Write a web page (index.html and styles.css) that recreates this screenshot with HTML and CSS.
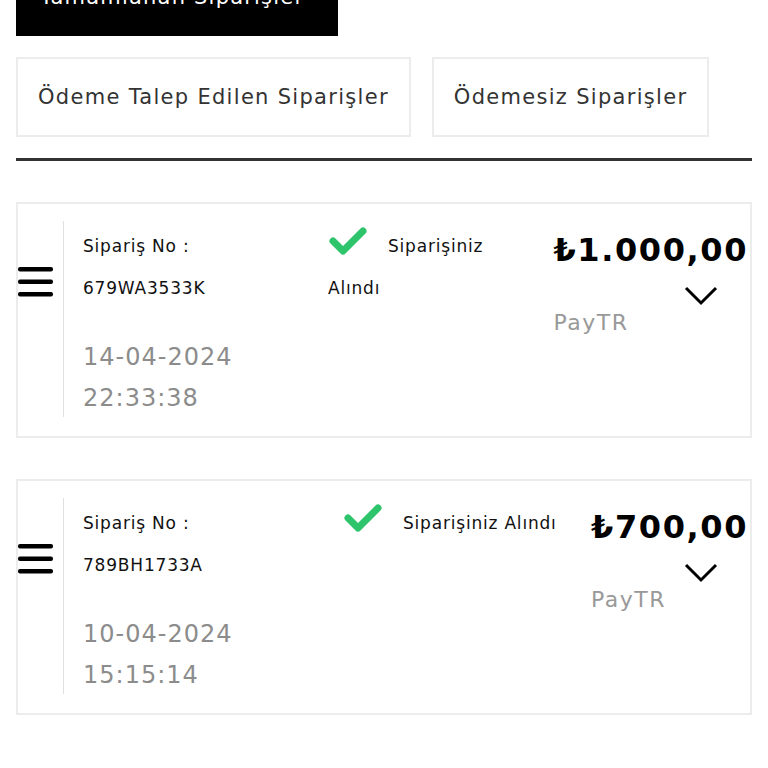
FILE: index.html
```html
<!DOCTYPE html>
<html lang="tr">
<head>
    <meta charset="UTF-8">
    <meta name="viewport" content="width=device-width, initial-scale=1.0">
    <title>Siparişlerim</title>
    <link rel="stylesheet" href="styles.css">
</head>
<body>
    <div id="page">
        <div class="tab-active">Tamamlanan Siparişler</div>

        <div class="tabs">
            <div class="tab">Ödeme Talep Edilen Siparişler</div>
            <div class="tab">Ödemesiz Siparişler</div>
        </div>

        <hr class="divider">

        <div class="card">
            <div class="menu">
                <svg width="36" height="30" viewBox="0 0 36 30"><rect x="0" y="0" width="35" height="4.5" rx="2"/><rect x="0" y="12.5" width="35" height="4.5" rx="2"/><rect x="0" y="25" width="35" height="4.5" rx="2"/></svg>
            </div>
            <div class="card-body">
                <div class="info">
                    <div class="no">Sipariş No :</div>
                    <div class="no">679WA3533K</div>
                    <div class="date">14-04-2024</div>
                    <div class="date">22:33:38</div>
                </div>
                <div class="status">
                    <svg class="check" width="40" height="30" viewBox="0 0 40 30"><path d="M5 15 L15 25 L35 5"/></svg>Siparişiniz Alındı
                </div>
                <div class="price">
                    <div class="amount">₺1.000,00</div>
                    <div class="chevron">
                        <svg width="34" height="20" viewBox="0 0 34 20"><polyline points="2,2 17,17 32,2"/></svg>
                    </div>
                    <div class="method">PayTR</div>
                </div>
            </div>
        </div>

        <div class="card">
            <div class="menu">
                <svg width="36" height="30" viewBox="0 0 36 30"><rect x="0" y="0" width="35" height="4.5" rx="2"/><rect x="0" y="12.5" width="35" height="4.5" rx="2"/><rect x="0" y="25" width="35" height="4.5" rx="2"/></svg>
            </div>
            <div class="card-body">
                <div class="info">
                    <div class="no">Sipariş No :</div>
                    <div class="no">789BH1733A</div>
                    <div class="date">10-04-2024</div>
                    <div class="date">15:15:14</div>
                </div>
                <div class="status oneline">
                    <svg class="check" width="40" height="30" viewBox="0 0 40 30"><path d="M5 15 L15 25 L35 5"/></svg>Siparişiniz Alındı
                </div>
                <div class="price">
                    <div class="amount">₺700,00</div>
                    <div class="chevron">
                        <svg width="34" height="20" viewBox="0 0 34 20"><polyline points="2,2 17,17 32,2"/></svg>
                    </div>
                    <div class="method">PayTR</div>
                </div>
            </div>
        </div>
    </div>
</body>
</html>
```

FILE: styles.css
```css
* {
    box-sizing: border-box;
}

html, body {
    margin: 0;
    background-color: #fff;
    font-family: "DejaVu Sans", "Noto Sans", sans-serif;
    overflow: hidden;
}

#page {
    padding: 0 16px;
}

.tab-active {
    margin-top: -42px;
    width: 322px;
    height: 78px;
    background-color: #000;
    color: #fff;
    font-size: 21px;
    letter-spacing: 1.2px;
    display: flex;
    align-items: center;
    padding-left: 24px;
}

.tabs {
    display: flex;
    gap: 21px;
    margin-top: 21px;
}

.tab {
    height: 80px;
    border: 2px solid #ececec;
    color: #333;
    font-size: 21px;
    letter-spacing: 1.3px;
    display: flex;
    align-items: center;
    padding: 0 20px;
}

.divider {
    margin: 21px 0 0;
    border: 0;
    height: 3px;
    background-color: #333;
}

.card {
    margin-top: 41px;
    height: 236px;
    border: 2px solid #ececec;
    display: flex;
}

.menu {
    width: 45px;
    margin-top: 63px;
    display: flex;
    align-items: flex-start;
}
.menu svg {
    fill: #000;
}

.card-body {
    flex: 1;
    margin: 17px 0 19px;
    border-left: 1px solid #e0e0e0;
    padding: 4px 2px 0 19px;
    display: flex;
}

.info {
    width: 245px;
    flex: none;
}
.info .no {
    font-size: 17px;
    letter-spacing: 0.8px;
    line-height: 42px;
    color: #111;
}
.info .date {
    font-size: 24px;
    letter-spacing: 1px;
    line-height: 41px;
    color: #8c8c8c;
}
.info .no + .date {
    margin-top: 28px;
}

.status {
    flex: 1;
    font-size: 17px;
    letter-spacing: 0.8px;
    line-height: 42px;
    color: #111;
    padding-right: 30px;
}
.status.oneline {
    padding-left: 15px;
    padding-right: 0;
    white-space: nowrap;
}
.check {
    vertical-align: -4px;
    margin-right: 20px;
    fill: none;
    stroke: #2ec46b;
    stroke-width: 7;
    stroke-linecap: round;
    stroke-linejoin: round;
}

.price {
    flex: none;
    padding-top: 5px;
}
.amount {
    font-size: 32px;
    font-weight: 700;
    letter-spacing: 1.6px;
    line-height: 40px;
    color: #000;
}
.chevron {
    display: flex;
    justify-content: flex-end;
    padding-right: 30px;
    margin-top: 16px;
}
.chevron svg {
    fill: none;
    stroke: #000;
    stroke-width: 3;
}
.method {
    font-size: 22px;
    letter-spacing: 1.5px;
    line-height: 34px;
    color: #999;
}
```
